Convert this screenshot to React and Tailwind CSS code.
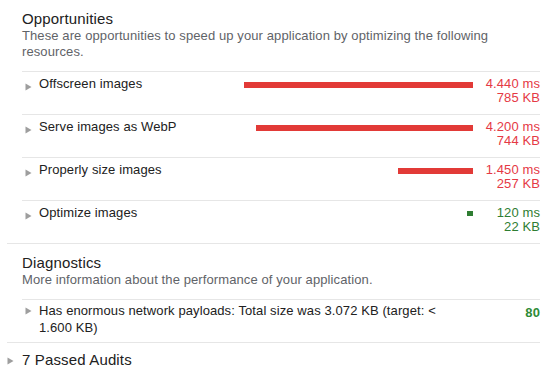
import React from "react";

const opportunities = [
  { label: "Offscreen images", ms: 4440, msText: "4.440 ms", kb: "785 KB", red: true },
  { label: "Serve images as WebP", ms: 4200, msText: "4.200 ms", kb: "744 KB", red: true },
  { label: "Properly size images", ms: 1450, msText: "1.450 ms", kb: "257 KB", red: true },
  { label: "Optimize images", ms: 120, msText: "120 ms", kb: "22 KB", red: false },
];

function Arrow({ className = "" }) {
  return (
    <svg width="7" height="8" viewBox="0 0 7 8" className={className}>
      <polygon points="0.5,0.5 6.5,4 0.5,7.5" fill="#9e9e9e" />
    </svg>
  );
}

export default function App() {
  return (
    <div
      className="w-[550px] h-[380px] bg-white overflow-hidden pl-[7px] pr-[10px] tracking-[0.1px]"
      style={{ fontFamily: '"Liberation Sans", Arial, sans-serif' }}
    >
      {/* Opportunities */}
      <div className="border-b border-[#e6e6e6] pl-[15px]">
        <div className="pt-[9px] text-[15px] leading-[19px] tracking-[0.15px] text-[#212121]">Opportunities</div>
        <div className="text-[13px] leading-[16px] text-[#5f6368]">
          These are opportunities to speed up your application by optimizing the following resources.
        </div>
        <div className="mt-[11px]">
          {opportunities.map((o) => (
            <div key={o.label} className="flex h-[43px] border-t border-[#e6e6e6] pt-[5px]">
              <div className="w-[17px] shrink-0">
                <Arrow className="ml-[3px] mt-[6px]" />
              </div>
              <div className="shrink-0 text-[13px] leading-[14px] text-[#212121]">{o.label}</div>
              <div className="flex flex-1 justify-end">
                <div
                  className={o.red ? "mt-[5px] h-[6px] bg-[#e23a37]" : "mt-[5px] h-[5px] bg-[#2e7d32]"}
                  style={{ width: `${Math.round((o.ms * 229) / 4440)}px` }}
                />
              </div>
              <div
                className={
                  o.red
                    ? "ml-[7px] w-[60px] shrink-0 text-right text-[13px] leading-[14px] text-[#e53945]"
                    : "ml-[7px] w-[60px] shrink-0 text-right text-[13px] leading-[14px] text-[#2e7d32]"
                }
              >
                <div>{o.msText}</div>
                <div>{o.kb}</div>
              </div>
            </div>
          ))}
        </div>
      </div>

      {/* Diagnostics */}
      <div className="border-b border-[#e6e6e6] pl-[15px]">
        <div className="pt-[9px] text-[15px] leading-[19px] tracking-[0.15px] text-[#212121]">Diagnostics</div>
        <div className="text-[13px] leading-[16px] text-[#5f6368]">
          More information about the performance of your application.
        </div>
        <div className="mt-[11px] flex h-[43px] border-t border-[#e6e6e6] pt-[2px]">
          <div className="w-[17px] shrink-0">
            <Arrow className="ml-[3px] mt-[5px]" />
          </div>
          <div className="w-[405px] shrink-0 text-[13px] leading-[17px] text-[#212121]">
            Has enormous network payloads: Total size was 3.072 KB (target: &lt; 1.600 KB)
          </div>
          <div className="flex-1 pt-[2px] text-right text-[13px] font-bold leading-[17px] text-[#2e8b36]">
            80
          </div>
        </div>
      </div>

      {/* Passed audits */}
      <div className="flex pt-[7px]">
        <div className="w-[15px] shrink-0">
          <Arrow className="mt-[7px]" />
        </div>
        <div className="text-[15px] leading-[19px] tracking-[0.15px] text-[#212121]">7 Passed Audits</div>
      </div>
    </div>
  );
}
